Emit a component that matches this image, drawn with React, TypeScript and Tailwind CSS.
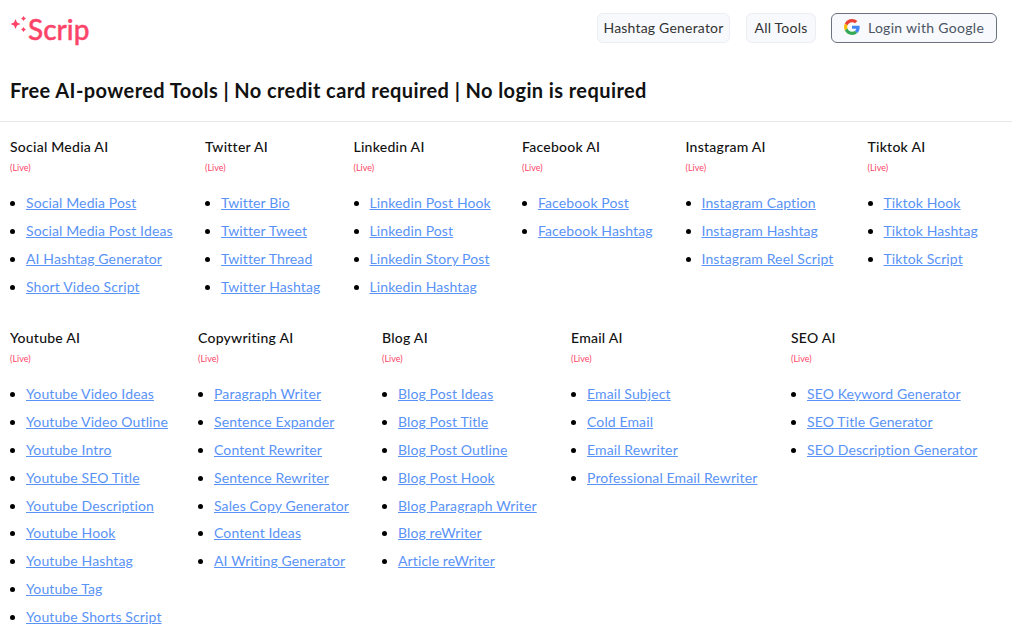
import React from "react";

const topRow = [
  { title: "Social Media AI", width: "w-[195px]", links: ["Social Media Post", "Social Media Post Ideas", "AI Hashtag Generator", "Short Video Script"] },
  { title: "Twitter AI", width: "w-[148.5px]", links: ["Twitter Bio", "Twitter Tweet", "Twitter Thread", "Twitter Hashtag"] },
  { title: "Linkedin AI", width: "w-[168.5px]", links: ["Linkedin Post Hook", "Linkedin Post", "Linkedin Story Post", "Linkedin Hashtag"] },
  { title: "Facebook AI", width: "w-[163.5px]", links: ["Facebook Post", "Facebook Hashtag"] },
  { title: "Instagram AI", width: "w-[182px]", links: ["Instagram Caption", "Instagram Hashtag", "Instagram Reel Script"] },
  { title: "Tiktok AI", width: "w-[134px]", links: ["Tiktok Hook", "Tiktok Hashtag", "Tiktok Script"] },
];

const bottomRow = [
  { title: "Youtube AI", width: "w-[188px]", links: ["Youtube Video Ideas", "Youtube Video Outline", "Youtube Intro", "Youtube SEO Title", "Youtube Description", "Youtube Hook", "Youtube Hashtag", "Youtube Tag", "Youtube Shorts Script"] },
  { title: "Copywriting AI", width: "w-[184px]", links: ["Paragraph Writer", "Sentence Expander", "Content Rewriter", "Sentence Rewriter", "Sales Copy Generator", "Content Ideas", "AI Writing Generator"] },
  { title: "Blog AI", width: "w-[189px]", links: ["Blog Post Ideas", "Blog Post Title", "Blog Post Outline", "Blog Post Hook", "Blog Paragraph Writer", "Blog reWriter", "Article reWriter"] },
  { title: "Email AI", width: "w-[220px]", links: ["Email Subject", "Cold Email", "Email Rewriter", "Professional Email Rewriter"] },
  { title: "SEO AI", width: "w-[200px]", links: ["SEO Keyword Generator", "SEO Title Generator", "SEO Description Generator"] },
];

function Sparkles() {
  return (
    <svg width="18" height="18" viewBox="0 0 18 18" className="absolute left-0 top-0" fill="#fb4468">
      <path d="M5.5 3 L7 6.5 L10.5 8 L7 9.5 L5.5 13 L4 9.5 L.5 8 L4 6.5Z" />
      <path d="M13.5 0 L14.5 1.5 L16 2.5 L14.5 3.5 L13.5 5 L12.5 3.5 L11 2.5 L12.5 1.5Z" />
      <path d="M13.5 11 L14.5 12.5 L16 13.5 L14.5 14.5 L13.5 16 L12.5 14.5 L11 13.5 L12.5 12.5Z" />
    </svg>
  );
}

function GoogleIcon() {
  return (
    <svg width="16" height="16" viewBox="0 0 48 48">
      <path fill="#EA4335" d="M24 9.5c3.54 0 6.71 1.22 9.21 3.6l6.85-6.85C35.9 2.38 30.47 0 24 0 14.62 0 6.51 5.38 2.56 13.22l7.98 6.19C12.43 13.72 17.74 9.5 24 9.5z" />
      <path fill="#4285F4" d="M46.98 24.55c0-1.57-.15-3.09-.38-4.55H24v9.02h12.94c-.58 2.96-2.26 5.48-4.78 7.18l7.73 6c4.51-4.18 7.09-10.36 7.09-17.65z" />
      <path fill="#FBBC05" d="M10.53 28.59c-.48-1.45-.76-2.99-.76-4.59s.27-3.14.76-4.59l-7.98-6.19C.92 16.46 0 20.12 0 24c0 3.88.92 7.54 2.56 10.78l7.97-6.19z" />
      <path fill="#34A853" d="M24 48c6.48 0 11.93-2.13 15.89-5.81l-7.73-6c-2.15 1.45-4.92 2.3-8.16 2.3-6.26 0-11.57-4.22-13.47-9.91l-7.98 6.19C6.51 42.62 14.62 48 24 48z" />
    </svg>
  );
}

function Column({ title, width, links }: { title: string; width: string; links: string[] }) {
  return (
    <div className={`${width} shrink-0`}>
      <h2 className="text-[14px] leading-[21px] font-medium tracking-[0.25px] text-[#111]">{title}</h2>
      <p className="mt-[5px] text-[9px] leading-[12px] text-[#fb4468]">(Live)</p>
      <ul className="mt-[15px] list-disc pl-4">
        {links.map((link) => (
          <li key={link} className="h-[27.875px] text-[14px] leading-[28px] tracking-[0.12px]">
            <a href="#" className="text-[#5a93f6] underline">{link}</a>
          </li>
        ))}
      </ul>
    </div>
  );
}

export default function App() {
  return (
    <div className="h-[634px] w-[1024px] overflow-hidden bg-white text-black font-['Lato','Noto_Sans',sans-serif]">
      <div className="w-[1012px]">
        <header className="flex h-[58px] items-center justify-between pb-[2px] pl-[10px] pr-[15px]">
          <div className="relative mt-[2px] h-[26px] w-[80px] pl-[18px] text-[28px] leading-[26px] font-medium text-[#fb4468] [-webkit-text-stroke:0.4px_#fb4468]">
            <Sparkles />
            <span className="relative">Scrip</span>
          </div>
          <nav className="flex items-center text-[14px] tracking-[0.2px] text-[#333]">
            <a className="flex h-[30px] w-[133px] items-center justify-center rounded-md border border-[#eceef2] bg-[#f8f9fc] pb-[2px]">Hashtag Generator</a>
            <a className="ml-4 flex h-[30px] w-[70px] items-center justify-center rounded-md border border-[#eceef2] bg-[#f8f9fc] pb-[2px]">All Tools</a>
            <button className="ml-[15px] flex h-[30px] w-[166px] items-center justify-center gap-2 rounded-md border border-[#6b7280] bg-[#f8f9fc] pb-[2px] tracking-[0.3px] text-[#4b5563]">
              <GoogleIcon />
              Login with Google
            </button>
          </nav>
        </header>
        <h1 className="mt-[18px] px-[10px] text-[20px] leading-[28px] font-bold tracking-[0.41px] text-[#111]">
          Free AI-powered Tools | No credit card required | No login is required
        </h1>
        <div className="mt-[17px] border-t border-[#e5e7eb]" />
        <section className="flex pl-[10px] pt-[14px]">
          {topRow.map((c) => <Column key={c.title} {...c} />)}
        </section>
        <section className="mt-[26.5px] flex pl-[10px]">
          {bottomRow.map((c) => <Column key={c.title} {...c} />)}
        </section>
      </div>
    </div>
  );
}
